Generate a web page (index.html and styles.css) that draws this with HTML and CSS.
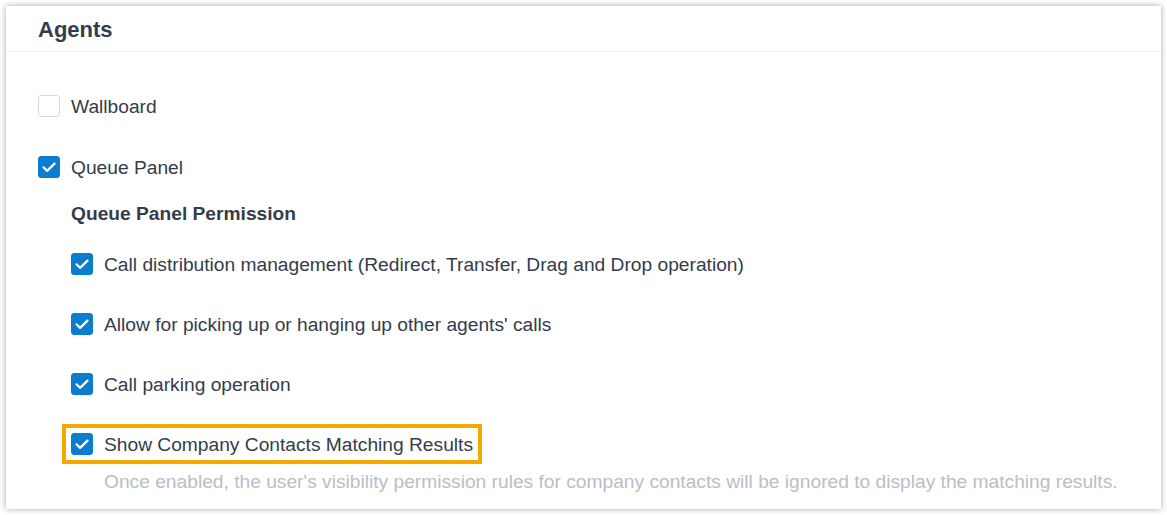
FILE: index.html
```html
<!DOCTYPE html>
<html lang="en">
<head>
    <meta charset="UTF-8">
    <meta name="viewport" content="width=device-width, initial-scale=1.0">
    <title>Agents</title>
    <link rel="stylesheet" href="styles.css">
</head>
<body>
    <div class="card">
        <div class="card-header">Agents</div>
        <div class="card-body">
            <label class="check-row">
                <span class="box"></span>
                <span class="label">Wallboard</span>
            </label>
            <label class="check-row queue">
                <span class="box checked">
                    <svg viewBox="0 0 20 20"><path d="M4.5 10.3l3.6 3.6L15.5 6.6" /></svg>
                </span>
                <span class="label">Queue Panel</span>
            </label>

            <div class="perm">
                <div class="perm-title">Queue Panel Permission</div>
                <label class="check-row sub">
                    <span class="box checked">
                        <svg viewBox="0 0 20 20"><path d="M4.5 10.3l3.6 3.6L15.5 6.6" /></svg>
                    </span>
                    <span class="label">Call distribution management (Redirect, Transfer, Drag and Drop operation)</span>
                </label>
                <label class="check-row sub">
                    <span class="box checked">
                        <svg viewBox="0 0 20 20"><path d="M4.5 10.3l3.6 3.6L15.5 6.6" /></svg>
                    </span>
                    <span class="label">Allow for picking up or hanging up other agents' calls</span>
                </label>
                <label class="check-row sub">
                    <span class="box checked">
                        <svg viewBox="0 0 20 20"><path d="M4.5 10.3l3.6 3.6L15.5 6.6" /></svg>
                    </span>
                    <span class="label">Call parking operation</span>
                </label>
                <label class="check-row sub highlight">
                    <span class="box checked">
                        <svg viewBox="0 0 20 20"><path d="M4.5 10.3l3.6 3.6L15.5 6.6" /></svg>
                    </span>
                    <span class="label">Show Company Contacts Matching Results</span>
                </label>
                <p class="hint">Once enabled, the user's visibility permission rules for company contacts will be ignored to display the matching results.</p>
            </div>
        </div>
    </div>
</body>
</html>
```

FILE: styles.css
```css
body {
    font-family: "Liberation Sans", Arial, sans-serif;
    margin: 0;
    padding: 6px;
    background-color: #ffffff;
    color: #343c4b;
}

.card {
    width: 1155px;
    height: 503px;
    background-color: #ffffff;
    box-shadow: 0 0 6px rgba(0, 0, 0, 0.35);
    overflow: hidden;
}

.card-header {
    height: 45px;
    line-height: 48px;
    padding-left: 32px;
    font-size: 22px;
    font-weight: bold;
    border-bottom: 1px solid #eef0f4;
}

.card-body {
    padding: 43px 32px 0 32px;
}

.check-row {
    display: flex;
    align-items: center;
    height: 22px;
    font-size: 19.2px;
    cursor: pointer;
}

.check-row .label {
    padding-top: 1px;
}

.check-row .box {
    width: 22px;
    height: 22px;
    box-sizing: border-box;
    border: 1px solid #d6d9e0;
    border-radius: 3px;
    margin-right: 11px;
    flex-shrink: 0;
}

.check-row .box.checked {
    background-color: #0b7dd1;
    border-color: #0b7dd1;
}

.box svg {
    display: block;
    width: 20px;
    height: 20px;
    fill: none;
    stroke: #ffffff;
    stroke-width: 2.2;
    stroke-linecap: round;
    stroke-linejoin: round;
}

.queue {
    margin-top: 39px;
}

.perm {
    padding-left: 33px;
}

.perm-title {
    margin-top: 25px;
    height: 22px;
    line-height: 22px;
    font-size: 19.2px;
    font-weight: bold;
}

.sub {
    margin-top: 38px;
}

.perm-title + .sub {
    margin-top: 28px;
}

.highlight {
    display: inline-flex;
    outline: 4px solid #f5a800;
    outline-offset: 5px;
}

.hint {
    margin: 12px 0 0 33px;
    line-height: 22px;
    font-size: 19.2px;
    color: #b9bec7;
}
```
